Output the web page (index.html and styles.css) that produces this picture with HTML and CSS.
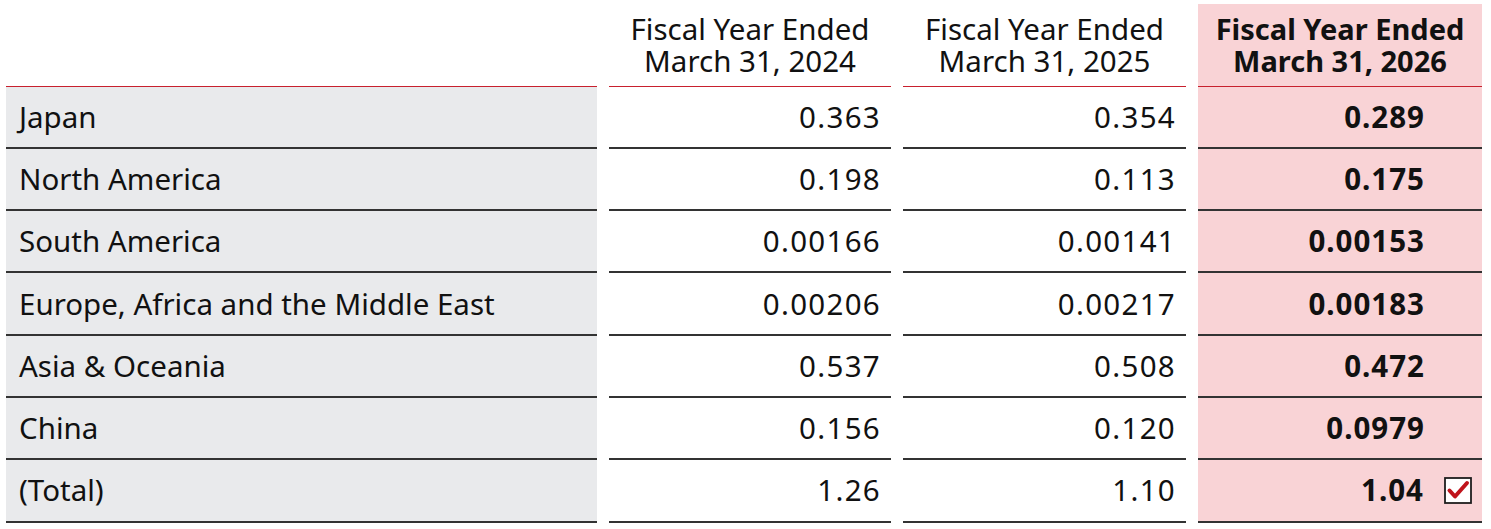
FILE: index.html
```html
<!DOCTYPE html>
<html lang="en">
<head>
<meta charset="utf-8">
<title>Fiscal Year Table</title>
<link rel="stylesheet" href="styles.css">
</head>
<body>
<div class="table">
  <div class="cell head label-head"></div>
  <div class="cell head"><span class="line">Fiscal Year Ended</span><span class="line">March 31, 2024</span></div>
  <div class="cell head"><span class="line">Fiscal Year Ended</span><span class="line">March 31, 2025</span></div>
  <div class="cell head hl"><span class="line">Fiscal Year Ended</span><span class="line">March 31, 2026</span></div>

  <div class="cell label">Japan</div>
  <div class="cell num">0.363</div>
  <div class="cell num">0.354</div>
  <div class="cell num hl">0.289</div>

  <div class="cell label">North America</div>
  <div class="cell num">0.198</div>
  <div class="cell num">0.113</div>
  <div class="cell num hl">0.175</div>

  <div class="cell label">South America</div>
  <div class="cell num">0.00166</div>
  <div class="cell num">0.00141</div>
  <div class="cell num hl">0.00153</div>

  <div class="cell label">Europe, Africa and the Middle East</div>
  <div class="cell num">0.00206</div>
  <div class="cell num">0.00217</div>
  <div class="cell num hl">0.00183</div>

  <div class="cell label">Asia &amp; Oceania</div>
  <div class="cell num">0.537</div>
  <div class="cell num">0.508</div>
  <div class="cell num hl">0.472</div>

  <div class="cell label">China</div>
  <div class="cell num">0.156</div>
  <div class="cell num">0.120</div>
  <div class="cell num hl">0.0979</div>

  <div class="cell label">(Total)</div>
  <div class="cell num">1.26</div>
  <div class="cell num">1.10</div>
  <div class="cell num hl total"><span>1.04</span><span class="check"><svg width="28" height="27" viewBox="0 0 28 27"><rect x="1" y="1" width="26" height="25" fill="#fff" stroke="#1e1e1e" stroke-width="1.8"/><path d="M5.5 13.5 L11 19.5 L23 6" fill="none" stroke="#c0141c" stroke-width="4" stroke-linecap="round" stroke-linejoin="round"/></svg></span></div>
</div>
</body>
</html>
```
FILE: styles.css
```css
html, body {
  margin: 0;
  padding: 0;
  background: #fff;
}
body {
  font-family: "Noto Sans", "Open Sans", sans-serif;
  color: #111;
}
.table {
  display: grid;
  grid-template-columns: 591px 282px 283px 284px;
  grid-template-rows: 86.5px repeat(7, 62.3px);
  column-gap: 12px;
  padding: 0 8px 0 6px;
}
.cell {
  display: flex;
  align-items: center;
  font-size: 29.5px;
  line-height: 36px;
  border-bottom: 2px solid #333;
  box-sizing: border-box;
}
.head {
  flex-direction: column;
  justify-content: center;
  text-align: center;
  font-size: 29.5px;
  line-height: 32px;
  border-bottom: 1.5px solid #c8202e;
  padding-top: 4px;
}
.line {
  display: block;
  height: 32px;
}
.label-head {
  border-bottom: 1.5px solid #c8202e;
}
.head.hl {
  margin-top: 4px;
  padding-top: 0;
  font-weight: 700;
  font-size: 29px;
}
.label {
  background: #e9eaec;
  padding-left: 13px;
}
.num {
  justify-content: flex-end;
  padding-right: 10px;
  letter-spacing: 1.3px;
}
.hl {
  background: #f9d3d6;
}
.num.hl {
  font-weight: 700;
  padding-right: 57px;
  letter-spacing: 1px;
}
.num.hl.total {
  padding-right: 10px;
  gap: 20px;
}
.check {
  display: flex;
}
```
